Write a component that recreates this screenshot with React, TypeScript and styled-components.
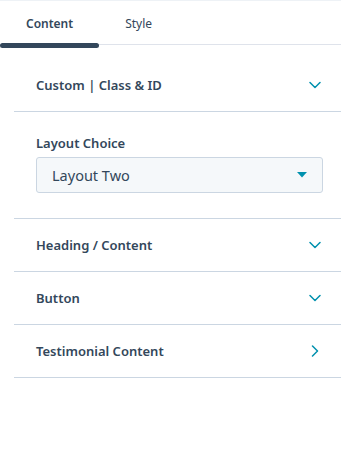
import React from "react";
import styled, { createGlobalStyle } from "styled-components";

const Global = createGlobalStyle`
  html, body { margin: 0; padding: 0; background: #ffffff; }
  body { font-family: "Noto Sans", "Liberation Sans", sans-serif; color: #33475b; }
  * { box-sizing: border-box; }
`;

const Panel = styled.div`
  width: 341px;
  height: 457px;
  background: #ffffff;
  border-top: 1px solid #eef2f6;
`;

const Tabs = styled.div`
  display: flex;
  border-bottom: 1px solid #dfe3eb;
  height: 44px;
`;

const Tab = styled.div<{ $active?: boolean }>`
  position: relative;
  padding: 0 26px;
  height: 44px;
  display: flex;
  align-items: center;
  font-size: 12px;
  font-weight: ${(p) => (p.$active ? 600 : 400)};
  color: #33475b;
  ${(p) =>
    p.$active &&
    `
    &::after {
      content: "";
      position: absolute;
      left: 0;
      right: 0;
      bottom: -3px;
      height: 5px;
      border-radius: 3px;
      background: #33475b;
    }
  `}
`;

const Sections = styled.div`
  margin: 14px 0 0 14px;
`;

const Row = styled.div<{ $first?: boolean }>`
  display: flex;
  align-items: center;
  justify-content: space-between;
  height: 53px;
  padding: 0 20px 0 22px;
  border-bottom: 1px solid #cbd6e2;
  font-size: 13px;
  font-weight: 600;
  color: #33475b;
`;

const Field = styled.div`
  padding: 22px 18px 25px 22px;
  border-bottom: 1px solid #cbd6e2;
`;

const Label = styled.div`
  font-size: 13px;
  font-weight: 600;
  color: #33475b;
  line-height: 18px;
  margin-bottom: 5px;
`;

const Select = styled.div`
  display: flex;
  align-items: center;
  justify-content: space-between;
  height: 36px;
  padding: 0 15px 0 15px;
  background: #f5f8fa;
  border: 1px solid #cbd6e2;
  border-radius: 3px;
  font-size: 14.5px;
  color: #33475b;
`;

const Icon = styled.svg`
  display: block;
  flex: none;
`;

const ChevronDown = () => (
  <Icon width="12" height="8" viewBox="0 0 12 8">
    <path d="M1 1.5 L6 6.5 L11 1.5" fill="none" stroke="#0091ae" strokeWidth="1.5" strokeLinecap="round" strokeLinejoin="round" />
  </Icon>
);

const ChevronRight = () => (
  <Icon width="8" height="12" viewBox="0 0 8 12" style={{ marginRight: 2 }}>
    <path d="M1.5 1 L6.5 6 L1.5 11" fill="none" stroke="#0091ae" strokeWidth="1.5" strokeLinecap="round" strokeLinejoin="round" />
  </Icon>
);

const Caret = () => (
  <Icon width="10" height="6" viewBox="0 0 10 6">
    <path d="M0 0 H10 L5 5.5 Z" fill="#0091ae" />
  </Icon>
);

export default function App() {
  return (
    <>
      <Global />
      <Panel>
        <Tabs>
          <Tab $active>Content</Tab>
          <Tab>Style</Tab>
        </Tabs>
        <Sections>
          <Row $first>
            <span>Custom | Class &amp; ID</span>
            <ChevronDown />
          </Row>
          <Field>
            <Label>Layout Choice</Label>
            <Select>
              <span>Layout Two</span>
              <Caret />
            </Select>
          </Field>
          <Row>
            <span>Heading / Content</span>
            <ChevronDown />
          </Row>
          <Row>
            <span>Button</span>
            <ChevronDown />
          </Row>
          <Row>
            <span>Testimonial Content</span>
            <ChevronRight />
          </Row>
        </Sections>
      </Panel>
    </>
  );
}
